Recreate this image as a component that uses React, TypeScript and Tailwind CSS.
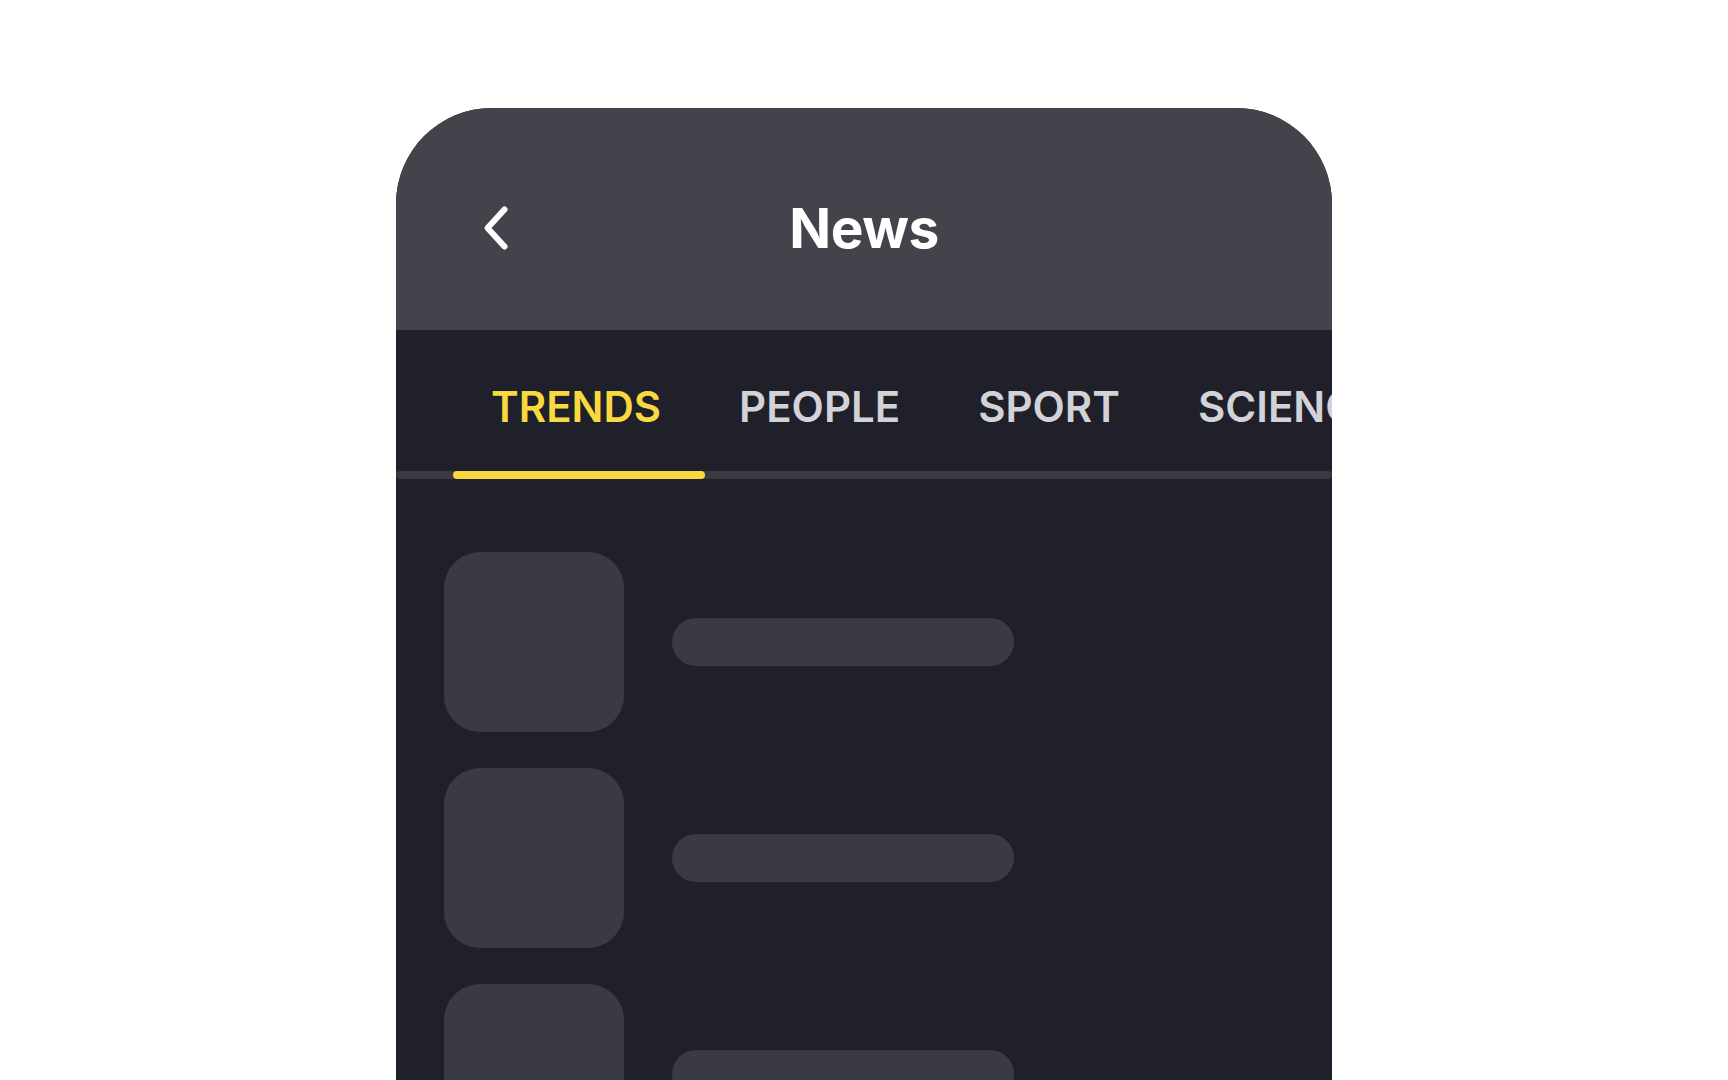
import React from "react";

const tabs = ["TRENDS", "PEOPLE", "SPORT", "SCIENCE"];

function ItemSkeleton() {
  return (
    <div className="flex items-center gap-[48px]">
      <div className="w-[180px] h-[180px] rounded-[36px] bg-[#3a3a42] shrink-0" />
      <div className="w-[342px] h-[48px] rounded-full bg-[#3a3a42]" />
    </div>
  );
}

export default function App() {
  return (
    <div
      className="w-full h-[1080px] bg-white flex justify-center pt-[108px] overflow-hidden"
      style={{ fontFamily: "Inter, 'Noto Sans', sans-serif" }}
    >
      <div className="w-[936px] h-[972px] rounded-t-[96px] overflow-hidden bg-[#1f2029] flex flex-col">
        <div className="h-[222px] bg-[#43434b] pt-[78px] shrink-0">
          <div className="grid grid-cols-[1fr_auto_1fr] items-center h-[84px]">
            <div className="pl-[86px] flex items-center">
              <svg width="28" height="46" viewBox="0 0 28 46" fill="none">
                <path
                  d="M22.5 4.5 L5.5 23 L22.5 41.5"
                  stroke="white"
                  strokeWidth="6"
                  strokeLinecap="round"
                  strokeLinejoin="round"
                />
              </svg>
            </div>
            <div className="text-white font-bold text-[55px] leading-none tracking-[-0.5px]">
              News
            </div>
            <div />
          </div>
        </div>

        <div className="flex flex-col shrink-0">
          <div className="flex pl-[56px] pt-[52px] h-[141px] whitespace-nowrap overflow-hidden">
            {tabs.map((t, i) => (
              <div
                key={t}
                className={
                  "px-[39px] font-semibold text-[42px] leading-[50px] shrink-0 " +
                  (i === 0 ? "text-[#f9d940]" : "text-[#d2d2d7]")
                }
              >
                {t}
              </div>
            ))}
          </div>
          <div className="h-[8px] rounded-full bg-[#3a3a42] flex">
            <div className="ml-[57px] w-[252px] h-[8px] rounded-full bg-[#f9d940]" />
          </div>
        </div>

        <div className="flex flex-col gap-[36px] pt-[73px] pl-[48px]">
          <ItemSkeleton />
          <ItemSkeleton />
          <ItemSkeleton />
          <ItemSkeleton />
        </div>
      </div>
    </div>
  );
}
